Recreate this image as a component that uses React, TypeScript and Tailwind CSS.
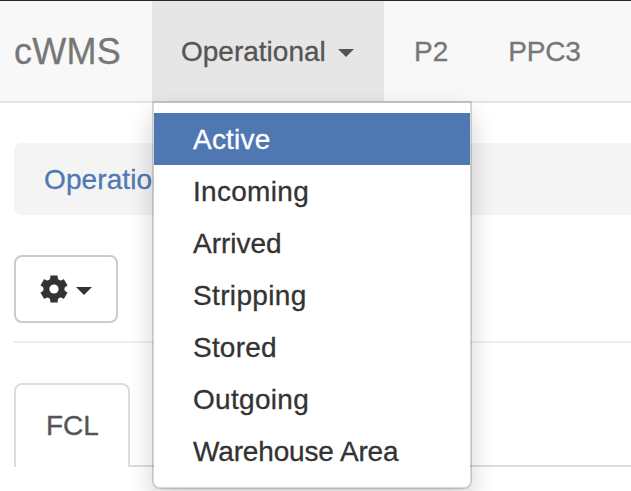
const items = [
  { label: 'Active', spacing: 'tracking-[0.2px]' },
  { label: 'Incoming', spacing: 'tracking-[0.3px]' },
  { label: 'Arrived', spacing: 'tracking-[0px]' },
  { label: 'Stripping', spacing: 'tracking-[0.35px]' },
  { label: 'Stored', spacing: 'tracking-[0.2px]' },
  { label: 'Outgoing', spacing: 'tracking-[0.3px]' },
  { label: 'Warehouse Area', spacing: 'tracking-[-0.15px]' },
];

function Caret() {
  return (
    <span className="inline-block h-0 w-0 shrink-0 border-x-8 border-t-8 border-x-transparent border-t-current" />
  );
}

function Gear() {
  return (
    <svg width="28" height="28" viewBox="-14 -14 28 28" className="shrink-0 fill-[#333]">
      <mask id="hub">
        <rect x="-14" y="-14" width="28" height="28" fill="white" />
        <circle r="4.6" fill="black" />
      </mask>
      <g mask="url(#hub)">
        <circle r="10.6" />
        {[0, 60, 120, 180, 240, 300].map((angle) => (
          <path
            key={angle}
            transform={`rotate(${angle})`}
            d="M-4.4 -9.5L-3.7 -11V-13Q-3.7 -13.5 -3.2 -13.5H3.2Q3.7 -13.5 3.7 -13V-11L4.4 -9.5Z"
          />
        ))}
      </g>
    </svg>
  );
}

function Dropdown() {
  return (
    <ul className="absolute left-0 top-full z-10 w-[320px] rounded-b-lg border-2 border-black/15 bg-white bg-clip-padding py-[10px] shadow-[0_12px_24px_rgba(0,0,0,0.175)]">
      {items.map((item, i) => (
        <li
          key={item.label}
          className={`h-[52px] whitespace-nowrap pl-[39px] leading-[54px] ${item.spacing} ${
            i === 0 ? 'bg-[#4f78b3] text-white' : 'text-[#333]'
          }`}
        >
          {item.label}
        </li>
      ))}
    </ul>
  );
}

export default function App() {
  return (
    <div className="h-[491px] w-[631px] overflow-hidden bg-white font-['Liberation_Sans',Arial,sans-serif] text-[28px] leading-[40px] text-[#333] [-webkit-text-stroke:0.3px]">
      <nav className="flex h-[103px] border-b-2 border-t border-b-[#e3e3e3] border-t-[#29252a] bg-[#f8f8f8] text-[#777]">
        <a className="flex w-[152px] shrink-0 items-center pl-[14px] pt-px text-[36px] tracking-[0.3px]">
          cWMS
        </a>
        <div className="relative flex w-[232px] shrink-0 items-center gap-3 bg-[#e6e6e6] pl-[29px] text-[#555]">
          <span className="pt-0.5">Operational</span>
          <span className="flex pt-1">
            <Caret />
          </span>
          <Dropdown />
        </div>
        <a className="flex items-center pl-[30px] pt-0.5">P2</a>
        <a className="flex items-center pl-[60px] pt-0.5 tracking-[-0.2px]">PPC3</a>
      </nav>
      <main className="pl-[14px] pt-10">
        <div className="h-[72px] rounded-l-lg bg-[#f4f4f4] pl-[30px] pt-[17px] tracking-[0.1px] text-[#4f78b3]">
          Operational
        </div>
        <button className="mt-10 flex h-[68px] w-[104px] items-center rounded-lg border-2 border-[#ccc] bg-white pl-6 text-[#333]">
          <Gear />
          <span className="ml-[8px] mt-[3px] flex">
            <Caret />
          </span>
        </button>
        <hr className="mt-[18px] border-0 border-t-2 border-[#eee]" />
        <div className="mt-10 flex items-end">
          <div className="h-[84px] w-[116px] rounded-t-lg border-2 border-b-0 border-[#ddd] pl-[30px] pt-[21px] text-[#555]">
            FCL
          </div>
          <div className="h-0.5 grow bg-[#ddd]" />
        </div>
      </main>
    </div>
  );
}
